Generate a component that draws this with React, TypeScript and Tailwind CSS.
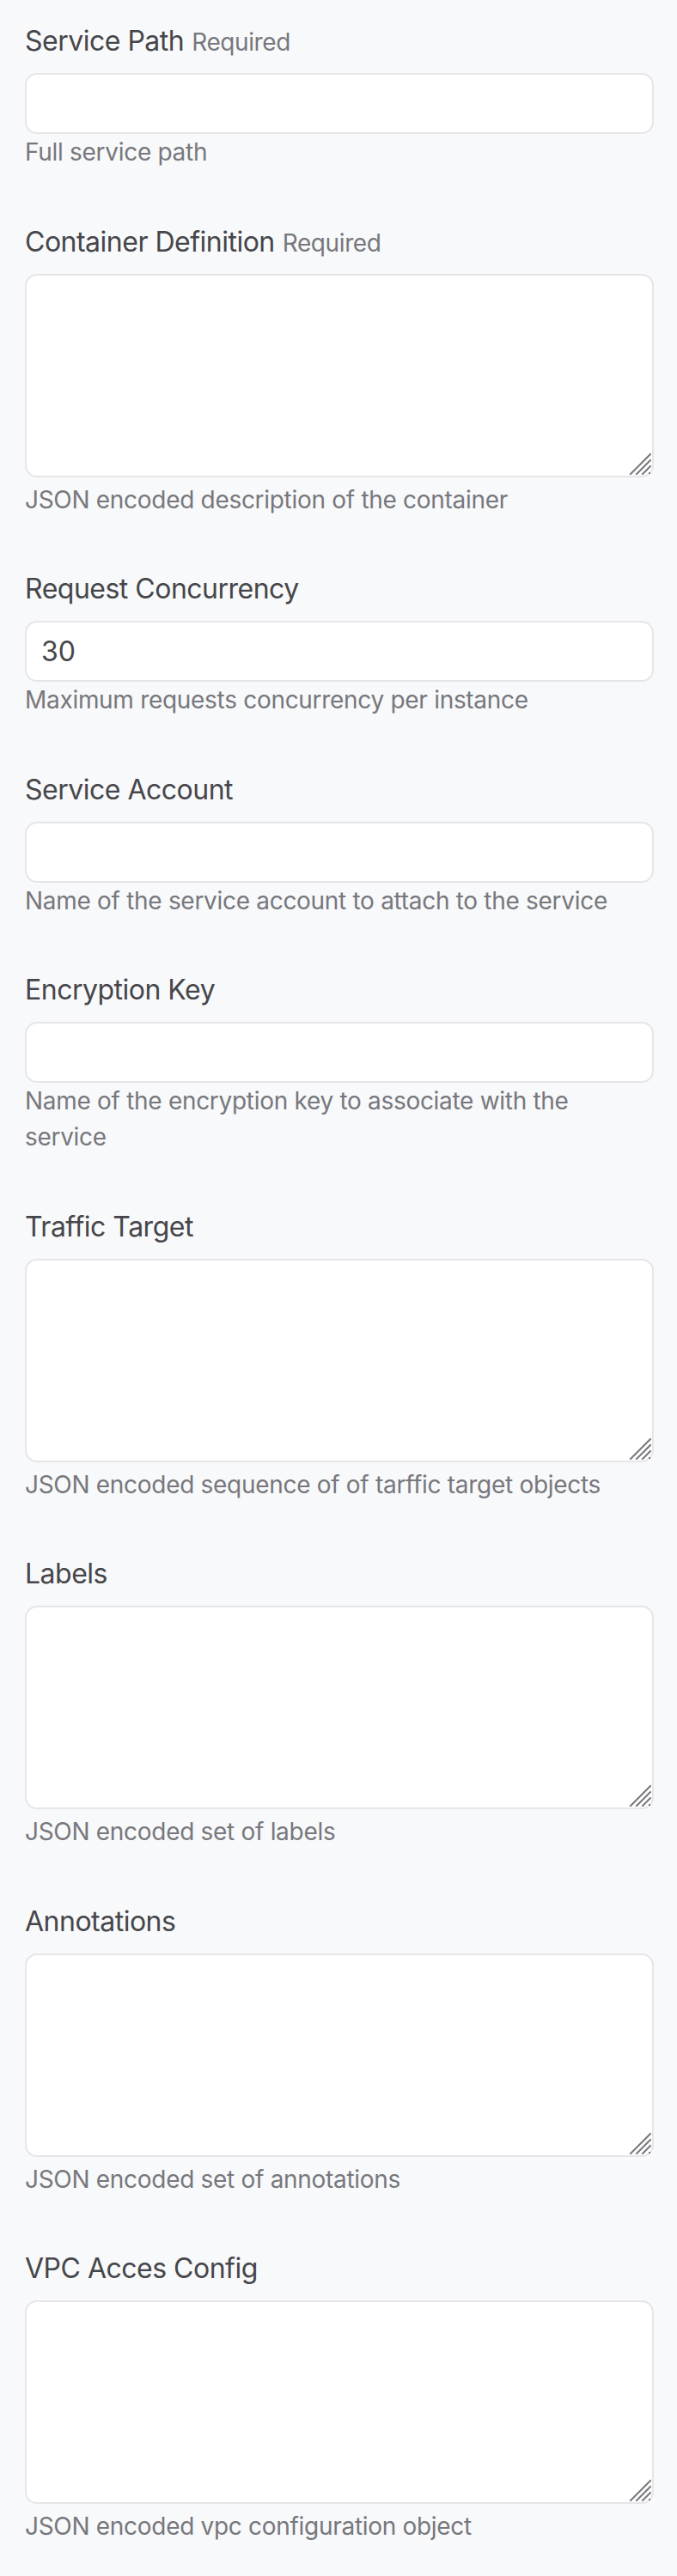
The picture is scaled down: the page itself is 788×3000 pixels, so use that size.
import React from 'react'

type Field = {
  label: string
  required?: boolean
  kind: 'input' | 'textarea'
  value?: string
  help: string
}

const fields: Field[] = [
  { label: 'Service Path', required: true, kind: 'input', help: 'Full service path' },
  { label: 'Container Definition', required: true, kind: 'textarea', help: 'JSON encoded description of the container' },
  { label: 'Request Concurrency', kind: 'input', value: '30', help: 'Maximum requests concurrency per instance' },
  { label: 'Service Account', kind: 'input', help: 'Name of the service account to attach to the service' },
  { label: 'Encryption Key', kind: 'input', help: 'Name of the encryption key to associate with the service' },
  { label: 'Traffic Target', kind: 'textarea', help: 'JSON encoded sequence of of tarffic target objects' },
  { label: 'Labels', kind: 'textarea', help: 'JSON encoded set of labels' },
  { label: 'Annotations', kind: 'textarea', help: 'JSON encoded set of annotations' },
  { label: 'VPC Acces Config', kind: 'textarea', help: 'JSON encoded vpc configuration object' },
]

function Grip() {
  return (
    <svg
      className="absolute right-[3px] bottom-[3px] pointer-events-none"
      width="26"
      height="26"
      viewBox="0 0 26 26"
    >
      <g stroke="#77777b" strokeWidth="2" strokeLinecap="square">
        <line x1="25" y1="2" x2="2" y2="25" />
        <line x1="25" y1="9" x2="9" y2="25" />
        <line x1="25" y1="16" x2="16" y2="25" />
        <line x1="24" y1="24" x2="24" y2="24" />
      </g>
    </svg>
  )
}

export default function App() {
  return (
    <div
      className="min-h-[3000px] bg-[#f8f9fa] pt-[24px] pl-[29px] pr-[27px]"
      style={{ fontFamily: 'Inter, "Noto Sans", sans-serif' }}
    >
      {fields.map((f) => (
        <div key={f.label} className="mb-[59.5px]">
          <label className="block h-[48px] text-[32px] leading-[48px] tracking-[-0.5px] text-[#46464a]">
            {f.label}
            {f.required && (
              <span className="ml-[9px] text-[28px] tracking-[-0.4px] text-[#77777d]">Required</span>
            )}
          </label>
          <div className="mt-[13px]">
            {f.kind === 'input' ? (
              <input
                type="text"
                defaultValue={f.value}
                className="block w-full h-[71px] rounded-[14px] border-2 border-[#e6e6ea] bg-white px-[17px] text-[32px] text-[#46464a] outline-none"
              />
            ) : (
              <div className="relative">
                <textarea className="block w-full h-[237px] rounded-[14px] border-2 border-[#e6e6ea] bg-white px-[17px] py-[12px] text-[32px] text-[#46464a] outline-none resize-none" />
                <Grip />
              </div>
            )}
          </div>
          <p
            className={`pr-[40px] text-[28px] leading-[42px] tracking-[-0.3px] text-[#77777d] ${
              f.kind === 'textarea' ? 'mt-[5px]' : ''
            }`}
          >
            {f.help}
          </p>
        </div>
      ))}
    </div>
  )
}
